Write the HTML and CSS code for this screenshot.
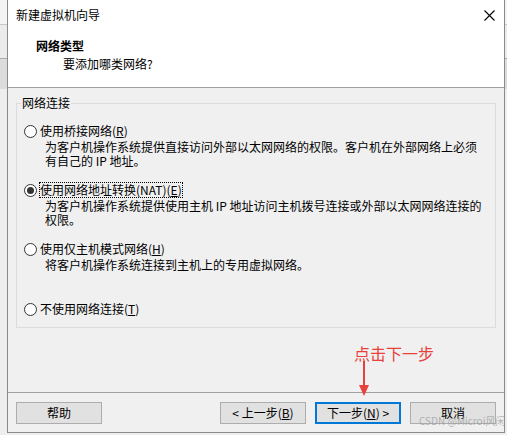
FILE: index.html
```html
<!DOCTYPE html>
<html lang="zh-CN">
<head>
<meta charset="utf-8">
<title>新建虚拟机向导</title>
<link rel="stylesheet" href="styles.css">
</head>
<body>
<div class="screen">
  <div class="dialog">
    <div class="header">
      <div class="titlebar">
        <span class="title">新建虚拟机向导</span>
        <svg class="close" width="11" height="11" viewBox="0 0 11 11"><path d="M0.5 0.5 L10.5 10.5 M10.5 0.5 L0.5 10.5" stroke="#000" stroke-width="1.1" fill="none"/></svg>
      </div>
      <div class="heading">
        <div class="h-title">网络类型</div>
        <div class="h-sub">要添加哪类网络?</div>
      </div>
    </div>
    <div class="body">
      <fieldset class="group">
        <legend class="group-legend">网络连接</legend>
        <div class="option">
          <div class="opt-row"><span class="radio"></span><span class="opt-label">使用桥接网络(<u>R</u>)</span></div>
          <div class="desc"><div class="line">为客户机操作系统提供直接访问外部以太网网络的权限。客户机在外部网络上必须</div><div class="line">有自己的 IP 地址。</div></div>
        </div>
        <div class="option">
          <div class="opt-row"><span class="radio checked"></span><span class="opt-label focused">使用网络地址转换(NAT)(<u>E</u>)</span></div>
          <div class="desc"><div class="line">为客户机操作系统提供使用主机 IP 地址访问主机拨号连接或外部以太网网络连接的</div><div class="line">权限。</div></div>
        </div>
        <div class="option">
          <div class="opt-row"><span class="radio"></span><span class="opt-label">使用仅主机模式网络(<u>H</u>)</span></div>
          <div class="desc"><div class="line">将客户机操作系统连接到主机上的专用虚拟网络。</div></div>
        </div>
        <div class="option">
          <div class="opt-row"><span class="radio"></span><span class="opt-label">不使用网络连接(<u>T</u>)</span></div>
        </div>
      </fieldset>
    </div>
    <div class="footer">
      <button class="btn">帮助</button>
      <div class="btn-group">
        <button class="btn">&lt; 上一步(<u>B</u>)</button>
        <button class="btn btn-default">下一步(<u>N</u>) &gt;</button>
        <button class="btn">取消</button>
      </div>
    </div>
  </div>
  <div class="note">点击下一步</div>
  <svg class="arrow" width="12" height="38" viewBox="0 0 12 38"><path d="M6 1 L6 28" stroke="#e8413b" stroke-width="2"/><path d="M1 25 L11 25 L6 36 Z" fill="#e8413b"/></svg>
  <div class="watermark">CSDN @Microi风闲</div>
</div>
</body>
</html>
```
FILE: styles.css
```css
* { box-sizing: border-box; }
html, body { margin: 0; padding: 0; }
body {
  font-family: "Noto Sans CJK SC", "Noto Sans", sans-serif;
  font-size: 12px;
  color: #000;
}
.screen {
  position: relative;
  width: 507px;
  height: 435px;
  overflow: hidden;
  background: linear-gradient(to bottom, #f4f4f4 0, #f4f4f4 24px, #c8c8c8 24px, #c8c8c8 25px, #ebebeb 25px, #ebebeb 58px, #a8a8a8 58px, #a8a8a8 59px, #dcdcdc 59px, #dcdcdc 89px, #eeeeee 89px);
}
.dialog {
  margin-left: 7px;
  width: 498px;
  height: 433px;
  border-left: 1px solid #8a8a8a;
  border-right: 1px solid #8a8a8a;
  border-bottom: 1px solid #8a8a8a;
  background: #f0f0f0;
  display: flex;
  flex-direction: column;
}
.header {
  height: 88px;
  background: #fff;
  border-bottom: 1px solid #a0a0a0;
}
.titlebar {
  height: 30px;
  display: flex;
  align-items: center;
  justify-content: space-between;
  padding: 0 9px 0 8px;
}
.title { line-height: 16px; }
.close { display: block; }
.heading { padding: 8px 0 0 28px; }
.h-title { font-weight: bold; line-height: 16px; }
.h-sub { margin: 2px 0 0 27px; line-height: 16px; }
.body { flex: 1; }
.group {
  margin: 7px 8px 0;
  padding: 0 0 10px 7px;
  border: 1px solid #dcdcdc;
  min-width: 0;
}
.group-legend {
  padding: 0 1px;
  margin-left: -3px;
  line-height: 16px;
}
.option { margin-top: 14px; }
.option:first-of-type { margin-top: 12px; }
.option:last-of-type { margin-top: 15px; }
.opt-row {
  display: flex;
  align-items: center;
  gap: 2px;
  height: 16px;
}
.radio {
  width: 13px;
  height: 13px;
  border: 1px solid #333;
  border-radius: 50%;
  background: #fff;
  display: flex;
  align-items: center;
  justify-content: center;
  flex: none;
}
.radio.checked::after {
  content: "";
  width: 7px;
  height: 7px;
  border-radius: 50%;
  background: #333;
}
.opt-label {
  line-height: 14px;
  border: 1px dotted transparent;
  white-space: nowrap;
}
.opt-label.focused { border-color: #000; }
.desc {
  margin-top: 1px;
  padding-left: 21px;
  min-height: 28px;
}
.line {
  line-height: 14px;
  height: 14px;
  white-space: nowrap;
}
.footer {
  border-top: 1px solid #a0a0a0;
  padding: 9px 8px 8px;
  display: flex;
  justify-content: space-between;
}
.btn-group { display: flex; gap: 9px; }
.btn {
  width: 86px;
  height: 22px;
  padding: 0;
  border: 1px solid #adadad;
  background: #e1e1e1;
  font-family: inherit;
  font-size: 12px;
  color: #000;
  line-height: 18px;
}
.btn-default { border: 2px solid #0078d7; }
.note {
  position: absolute;
  left: 354px;
  top: 343px;
  font-size: 16px;
  line-height: 20px;
  color: #e8413b;
}
.arrow {
  position: absolute;
  left: 358px;
  top: 360px;
}
.watermark {
  position: absolute;
  left: 419px;
  top: 415px;
  font-size: 10px;
  line-height: 12px;
  color: rgba(150, 150, 150, 0.7);
  white-space: nowrap;
}
```
